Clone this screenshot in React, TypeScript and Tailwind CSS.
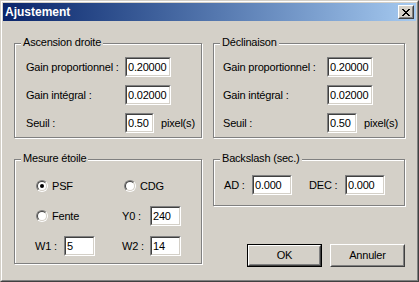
import React from 'react';

const Field = ({ value, w }: { value: string; w: string }) => (
  <div className={`${w} h-[20px] border border-t-[#808080] border-l-[#808080] border-r-white border-b-white`}>
    <div className="h-full border border-t-[#404040] border-l-[#404040] border-r-[#d4d0c8] border-b-[#d4d0c8] bg-white pl-px flex items-center leading-none">
      {value}
    </div>
  </div>
);

const Group = ({ title, className, children }: { title: string; className: string; children: React.ReactNode }) => (
  <div className={`relative border border-[#808080] shadow-[inset_1px_1px_0_#fff,1px_1px_0_#fff] ${className}`}>
    <span className="absolute left-[6px] top-[-8px] px-[2px] bg-[#d4d0c8] leading-[13px]">{title}</span>
    {children}
  </div>
);

const Radio = ({ checked, label }: { checked?: boolean; label: string }) => (
  <div className="flex items-center gap-[4px]">
    <div className="w-[12px] h-[12px] rounded-full border border-t-[#808080] border-l-[#808080] border-r-white border-b-white">
      <div className="w-full h-full rounded-full border border-t-[#404040] border-l-[#404040] border-r-[#d4d0c8] border-b-[#d4d0c8] bg-white flex items-center justify-center">
        {checked && <div className="w-[4px] h-[4px] rounded-full bg-black" />}
      </div>
    </div>
    <span>{label}</span>
  </div>
);

const Button = ({ label, primary }: { label: string; primary?: boolean }) => (
  <div className={`w-[75px] h-[23px] ${primary ? 'border border-black' : ''}`}>
    <div className="h-full border border-t-white border-l-white border-r-[#404040] border-b-[#404040]">
      <div className="h-full border border-t-[#d4d0c8] border-l-[#d4d0c8] border-r-[#808080] border-b-[#808080] flex items-center justify-center">
        {label}
      </div>
    </div>
  </div>
);

const rows = [
  ['Gain proportionnel :', '0.20000'],
  ['Gain intégral :', '0.02000'],
];

const AxisBox = ({ title, labelW, pl, seuilW }: { title: string; labelW: string; pl: string; seuilW: string }) => (
  <Group title={title} className={`h-[95px] pt-[13px] ${pl}`}>
    <div className="flex flex-col gap-[8px]">
      {rows.map(([l, v]) => (
        <div key={l} className="flex items-center h-[20px]">
          <span className={labelW}>{l}</span>
          <Field value={v} w="w-[46px]" />
        </div>
      ))}
      <div className="flex items-center h-[20px]">
        <span className={labelW}>Seuil :</span>
        <Field value="0.50" w={seuilW} />
        <span className="ml-[7px]">pixel(s)</span>
      </div>
    </div>
  </Group>
);

export default function App() {
  return (
    <div className="w-[419px] h-[282px] bg-[#d4d0c8] border border-t-[#d4d0c8] border-l-[#d4d0c8] border-r-[#404040] border-b-[#404040] font-['Liberation_Sans',Arial,sans-serif] text-[11px] tracking-[-0.2px] text-black">
      <div className="h-full border border-t-white border-l-white border-r-[#808080] border-b-[#808080] p-px flex flex-col">
        {/* title bar */}
        <div className="h-[18px] flex items-center justify-between bg-gradient-to-r from-[#0a246a] to-[#a6caf0] pl-[2px] pr-[2px]">
          <span className="text-white font-bold text-[12px] tracking-normal leading-none">Ajustement</span>
          <div className="w-[16px] h-[14px] border border-t-white border-l-white border-r-[#404040] border-b-[#404040] bg-[#d4d0c8]">
            <div className="h-full border border-t-[#d4d0c8] border-l-[#d4d0c8] border-r-[#808080] border-b-[#808080] flex items-center justify-center">
              <svg width="8" height="7" viewBox="0 0 8 7" shapeRendering="crispEdges">
                <path d="M0 0h2v1H0zM6 0h2v1H6zM1 1h2v1H1zM5 1h2v1H5zM2 2h4v1H2zM3 3h2v1H3zM2 4h4v1H2zM1 5h2v1H1zM5 5h2v1H5zM0 6h2v1H0zM6 6h2v1H6z" fill="#000" />
              </svg>
            </div>
          </div>
        </div>

        {/* client */}
        <div className="flex-1 px-[11px] pt-[22px]">
          <div className="flex gap-[11px]">
            <div className="w-[188px]">
              <AxisBox title="Ascension droite" labelW="w-[99px]" pl="pl-[11px]" seuilW="w-[29px]" />
            </div>
            <div className="w-[192px]">
              <AxisBox title="Déclinaison" labelW="w-[104px]" pl="pl-[9px]" seuilW="w-[30px]" />
            </div>
          </div>

          <div className="flex gap-[11px] mt-[21px]">
            <div className="w-[188px]">
              <Group title="Mesure étoile" className="pt-[16px] pb-[7px] pl-[21px]">
                <div className="grid grid-cols-[86px_1fr] gap-y-[10px]">
                  <div className="h-[20px] flex items-center"><Radio checked label="PSF" /></div>
                  <div className="h-[20px] flex items-center pl-[2px]"><Radio label="CDG" /></div>
                  <div className="h-[20px] flex items-center"><Radio label="Fente" /></div>
                  <div className="h-[20px] flex items-center">
                    <span className="w-[28px]">Y0 :</span>
                    <Field value="240" w="w-[31px]" />
                  </div>
                  <div className="h-[20px] flex items-center">
                    <span className="w-[29px] -ml-px">W1 :</span>
                    <Field value="5" w="w-[31px]" />
                  </div>
                  <div className="h-[20px] flex items-center">
                    <span className="w-[28px]">W2 :</span>
                    <Field value="14" w="w-[31px]" />
                  </div>
                </div>
              </Group>
            </div>
            <div className="w-[192px]">
              <Group title="Backslash (sec.)" className="pt-[15px] pb-[10px] pl-[10px]">
                <div className="flex items-center h-[20px]">
                  <span className="w-[28px]">AD :</span>
                  <Field value="0.000" w="w-[40px]" />
                  <span className="w-[36px] ml-[17px]">DEC :</span>
                  <Field value="0.000" w="w-[40px]" />
                </div>
              </Group>
              <div className="flex justify-end gap-[8px] mt-[38px]">
                <Button label="OK" primary />
                <Button label="Annuler" />
              </div>
            </div>
          </div>
        </div>
      </div>
    </div>
  );
}
